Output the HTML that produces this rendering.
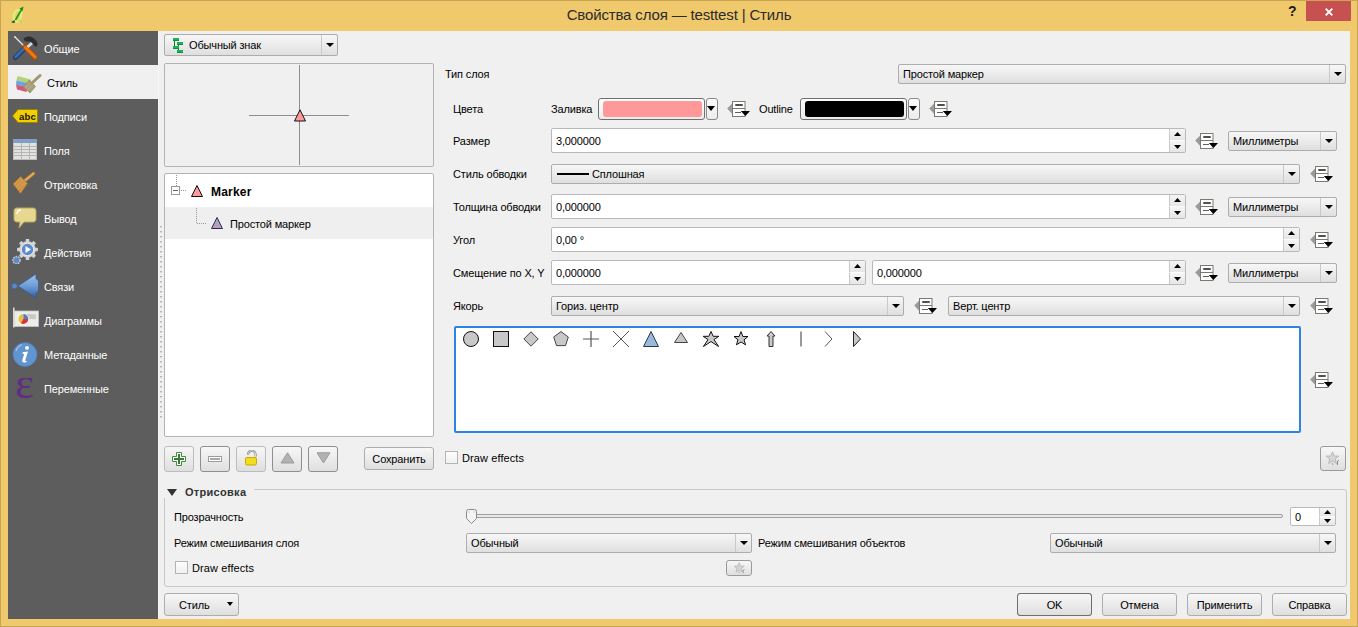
<!DOCTYPE html><html><head><meta charset="utf-8"><title>QGIS</title><style>
*{margin:0;padding:0;box-sizing:border-box}
html,body{width:1358px;height:627px;overflow:hidden}
body{background:#f0c96c;font-family:"Liberation Sans", sans-serif;font-size:11px;color:#000;position:relative}
div,span,svg,i,b{position:absolute;display:block}
.lbl{white-space:nowrap;line-height:16px;color:#000;letter-spacing:-0.15px}
.ct{white-space:nowrap;line-height:14px;color:#000;letter-spacing:-0.15px}
.cb{border:1px solid #adadad;border-radius:2px;background:linear-gradient(#f7f7f7,#dfdfdf)}
.sep{top:0;bottom:0;width:1px;background:#c9c9c9}
.tri{width:0;height:0;border-left:4px solid transparent;border-right:4px solid transparent;border-top:4px solid #000}
.sp{border:1px solid #b9b9b9;border-radius:2px;background:#fff}
.sbtn{border-left:1px solid #c9c9c9;background:linear-gradient(#f5f5f5,#e6e6e6)}
.tup{left:50%;top:50%;margin-left:-4px;margin-top:-2px;width:0;height:0;border-left:4px solid transparent;border-right:4px solid transparent;border-bottom:4px solid #000}
.tdn{left:50%;top:50%;margin-left:-4px;margin-top:-2px;width:0;height:0;border-left:4px solid transparent;border-right:4px solid transparent;border-top:4px solid #000}
.btn{border:1px solid #adadad;border-radius:3px;background:linear-gradient(#f7f7f7,#dfdfdf);text-align:center;white-space:nowrap;padding-top:1px;letter-spacing:-0.15px}
.ddi{}
.side{left:8px;top:31px;width:150px;height:588px;background:#5d5d5d}
.si{color:#fff;white-space:nowrap;line-height:16px;letter-spacing:-0.15px}
</style></head><body>
<div style="left:0;top:0;width:1358px;height:1px;background:#c9a453"></div>
<div style="left:0;top:0;width:1px;height:627px;background:#c9a453"></div>
<div style="left:1357px;top:0;width:1px;height:627px;background:#c9a453"></div>
<div style="left:0;top:626px;width:1358px;height:1px;background:#c9a453"></div>
<div class="lbl" style="left:0;top:6px;width:1358px;text-align:center;font-size:15px;line-height:18px;color:#2b2b2b">Свойства слоя — testtest | Стиль</div>
<div style="left:1306px;top:1px;width:45px;height:20px;background:#c75050"></div>
<svg style="left:1325px;top:8px" width="8" height="8" viewBox="0 0 8 8"><path d="M0.7 0.7 L7.3 7.3 M7.3 0.7 L0.7 7.3" stroke="#fff" stroke-width="1.9"/></svg>
<div style="left:1288px;top:3px;font-weight:bold;font-size:14px;line-height:17px;color:#1a1a1a">?</div>
<svg style="left:11px;top:6px" width="14" height="17" viewBox="0 0 14 17"><ellipse cx="6.5" cy="9.8" rx="3.6" ry="5.8" fill="none" stroke="#dcef7a" stroke-width="2.4" transform="rotate(12 6.5 9.8)"/><path d="M4.5 14 L10.5 3.5" stroke="#1e9a1e" stroke-width="1.7"/><path d="M8.5 2.5 L12.5 0.5 L11.5 5Z" fill="#1a8c1a"/><path d="M0 16 L4 14 L3.5 17.5Z" fill="#1d5f1d"/><path d="M7.5 14 L11 16" stroke="#b8d060" stroke-width="1.4"/></svg>
<div style="left:8px;top:31px;width:1342px;height:588px;background:#f0f0f0"></div>
<div class="side"></div>
<div style="left:8px;top:65px;width:150px;height:34px;background:#f0f0f0"></div>
<div style="left:13px;top:35px"><svg width="26" height="26" viewBox="0 0 26 26"><path d="M1.5 1.5 L12 12" stroke="#e8e8e8" stroke-width="1.3"/><path d="M1 1 L3 2 L2 3Z" fill="#fff"/><path d="M2.5 22.5 L11 14" stroke="#1f3f70" stroke-width="5" stroke-linecap="round"/><path d="M2.5 22 L10.5 14" stroke="#3a6db0" stroke-width="2.6" stroke-linecap="round"/><path d="M11 14 L13 12" stroke="#444" stroke-width="2.4"/><path d="M22 22 L12 12" stroke="#b84f00" stroke-width="5" stroke-linecap="round"/><path d="M22 22 L12.5 12.5" stroke="#f07a10" stroke-width="3" stroke-linecap="round"/><path d="M13.5 11 L18 7 L20 9 L15.5 13Z" fill="#d8d8d8"/><path d="M10.5 4 C12 1.5 17 0 21 3.5 C23 5.3 24 7 24.5 8.5 L23.5 12 L21 10.5 C20 8 18 6 15 6.5 C13 6.8 11.5 6 10.5 4Z" fill="#2e2e2e"/></svg></div>
<div class="si" style="left:44px;top:41px;color:#fff">Общие</div>
<div style="left:16px;top:70px"><svg width="26" height="26" viewBox="0 0 26 26"><path d="M1.5 6 L15 9.5 L13.5 13.5 L0.5 10.5Z" fill="#b5d27a"/><path d="M0.5 10.5 L13.5 13.5 L12 17.5 L0 14.5Z" fill="#64a6e2"/><path d="M0 14.5 L12 17.5 L10.5 22 L1 19.5Z" fill="#d2587c"/><path d="M7 16.5 L13.5 10 L19.5 16.5 L14 23Z" fill="#a89f7a" stroke="#8c8360" stroke-width="0.6"/><path d="M9 18.5 L15 12.5 M11 20.5 L17 14.5" stroke="#c2ba98" stroke-width="0.8"/><path d="M16 13 L24 5.5" stroke="#a0976f" stroke-width="3" stroke-linecap="round"/></svg></div>
<div class="si" style="left:47px;top:75px;color:#000">Стиль</div>
<div style="left:12px;top:109px"><svg width="26" height="14" viewBox="0 0 26 14"><path d="M0.5 7 L6 0.5 L25.5 0.5 L25.5 13.5 L6 13.5 Z" fill="#f2cf00" stroke="#9a8200"/><text x="7" y="10.5" font-family="Liberation Sans" font-weight="bold" font-size="9.5" letter-spacing="0.2" fill="#111">abc</text></svg></div>
<div class="si" style="left:44px;top:109px;color:#fff">Подписи</div>
<div style="left:13px;top:139px"><svg width="24" height="21" viewBox="0 0 24 21"><rect x="0.5" y="0.5" width="23" height="20" fill="#e2e2e0" stroke="#bdbdbb"/><rect x="0" y="0" width="24" height="4" fill="#7f9fc6"/><path d="M1 7.5H23M1 10.5H23M1 13.5H23M1 16.5H23M8.5 4V20M16.5 4V20" stroke="#b5b5b3" stroke-width="1"/></svg></div>
<div class="si" style="left:44px;top:143px;color:#fff">Поля</div>
<div style="left:12px;top:172px"><svg width="24" height="23" viewBox="0 0 24 23"><path d="M13 8.5 L21.5 1.5" stroke="#c98a35" stroke-width="3.2" stroke-linecap="round"/><path d="M13 8.5 L21.5 1.5" stroke="#e8b060" stroke-width="1.4" stroke-linecap="round"/><path d="M1 12 L8.6 4.5 L15.5 11.5 L8.5 21.5Z" fill="#d49a4a" stroke="#a8702c" stroke-width="0.7"/><path d="M3 14 L9.5 7 M5 16.5 L11.5 9.5 M7 19 L13.5 12" stroke="#b8803a" stroke-width="0.6"/></svg></div>
<div class="si" style="left:44px;top:177px;color:#fff">Отрисовка</div>
<div style="left:13px;top:207px"><svg width="24" height="22" viewBox="0 0 24 22"><path d="M4 1 H20 C22 1 23 2 23 4 V12 C23 14 22 15 20 15 H11 L6 21 L7 15 H4 C2 15 1 14 1 12 V4 C1 2 2 1 4 1Z" fill="#e6d88e" stroke="#b9a85a"/><path d="M4 7 C4 4 5 3 8 3" stroke="#fff" stroke-width="1.4" fill="none"/></svg></div>
<div class="si" style="left:44px;top:211px;color:#fff">Вывод</div>
<div style="left:12px;top:238px"><svg width="26" height="26" viewBox="0 0 26 26"><rect x="-1.8" y="-10.4" width="3.6" height="4" rx="0.6" fill="#d4d4d4" transform="translate(15.5 11.5) rotate(0)"/><rect x="-1.8" y="-10.4" width="3.6" height="4" rx="0.6" fill="#d4d4d4" transform="translate(15.5 11.5) rotate(45)"/><rect x="-1.8" y="-10.4" width="3.6" height="4" rx="0.6" fill="#d4d4d4" transform="translate(15.5 11.5) rotate(90)"/><rect x="-1.8" y="-10.4" width="3.6" height="4" rx="0.6" fill="#d4d4d4" transform="translate(15.5 11.5) rotate(135)"/><rect x="-1.8" y="-10.4" width="3.6" height="4" rx="0.6" fill="#d4d4d4" transform="translate(15.5 11.5) rotate(180)"/><rect x="-1.8" y="-10.4" width="3.6" height="4" rx="0.6" fill="#d4d4d4" transform="translate(15.5 11.5) rotate(225)"/><rect x="-1.8" y="-10.4" width="3.6" height="4" rx="0.6" fill="#d4d4d4" transform="translate(15.5 11.5) rotate(270)"/><rect x="-1.8" y="-10.4" width="3.6" height="4" rx="0.6" fill="#d4d4d4" transform="translate(15.5 11.5) rotate(315)"/><circle cx="15.5" cy="11.5" r="8.3" fill="#d4d4d4"/><circle cx="15.5" cy="11.5" r="6.2" fill="#5b8dcc" stroke="#f0f0f0" stroke-width="1"/><path d="M13.5 8 L19 11.5 L13.5 15Z" fill="#fff"/><circle cx="4.5" cy="22.2" r="3.6" fill="#5d8ccc" stroke="#c8c8c8" stroke-width="1.5" stroke-dasharray="1.6 1"/></svg></div>
<div class="si" style="left:44px;top:245px;color:#fff">Действия</div>
<div style="left:11px;top:273px"><svg width="28" height="26" viewBox="0 0 28 26"><defs><linearGradient id="gl" x1="0" y1="0" x2="0" y2="1"><stop offset="0" stop-color="#9fc2ea"/><stop offset="0.5" stop-color="#6f9dd6"/><stop offset="1" stop-color="#2f5f9f"/></linearGradient></defs><path d="M7 13 L25 1 L25 5.5 L27.5 8 L27.5 18 L25 20.5 L25 25 Z" fill="url(#gl)" stroke="#2d5a96" stroke-width="0.7"/><circle cx="3.5" cy="13" r="2.8" fill="#5a88c6" stroke="#3a649e" stroke-width="0.6"/></svg></div>
<div class="si" style="left:44px;top:279px;color:#fff">Связи</div>
<div style="left:12px;top:307px"><svg width="27" height="21" viewBox="0 0 27 21"><rect x="2" y="4" width="24.5" height="15.5" fill="#ecece8" stroke="#c4c4c0" stroke-width="0.8"/><path d="M14 7 C17 6 20 8 24 7 L24 12 C21 13 18 11 15 13Z" fill="#c9c9c5"/><rect x="1" y="0.5" width="1.6" height="20" fill="#d8d8d4"/><circle cx="11.3" cy="12" r="5.6" fill="#fff"/><path d="M11.3 12 L11.3 7 A5 5 0 0 0 8.8 16.3Z" fill="#e8c23a"/><path d="M11.3 12 L8.8 16.3 A5 5 0 0 0 16.3 12Z" fill="#d8333a"/><path d="M11.3 12 L16.3 12 A5 5 0 0 0 11.3 7Z" fill="#4a7fcf"/></svg></div>
<div class="si" style="left:44px;top:313px;color:#fff">Диаграммы</div>
<div style="left:12px;top:342px"><svg width="26" height="26" viewBox="0 0 26 26"><circle cx="13" cy="12.5" r="12" fill="#6294d0" stroke="#4d7dbb" stroke-width="0.8"/><path d="M4 9 A10 10 0 0 1 10 2.5" stroke="#a9c6ea" stroke-width="1.2" fill="none"/><circle cx="15" cy="5.8" r="1.9" fill="#fff"/><path d="M10.5 10.2 L16 9.6 L13.2 18.2 Q12.9 19.4 14.8 18.8 L14.6 20 Q9.8 21.6 10.2 18.6 L12.2 12 L10.6 11.8Z" fill="#fff"/></svg></div>
<div class="si" style="left:44px;top:347px;color:#fff">Метаданные</div>
<div style="left:15px;top:378px"><svg width="22" height="26" viewBox="0 0 22 26"><text x="0" y="20" font-family="Liberation Serif" font-size="45" fill="#5f2d82">ε</text></svg></div>
<div class="si" style="left:44px;top:381px;color:#fff">Переменные</div>
<div style="left:158px;top:31px;width:1px;height:588px;background:#f7f7f7"></div>
<div style="left:160px;top:226px;width:2px;height:193px;background:repeating-linear-gradient(#b4b4b4 0 1px,#d8d8d8 1px 2px,#f0f0f0 2px 5px)"></div>
<div class="cb" style="left:164px;top:34px;width:174px;height:22px"><svg style="left:8px;top:3px" width="11" height="16" viewBox="0 0 11 16"><path d="M1.5 2V10 M5.5 6V14" stroke="#0d7a33" stroke-width="1"/><rect x="0" y="0" width="6" height="3" fill="#1db354"/><rect x="0" y="2" width="6" height="1" fill="#0f8f3c"/><rect x="4" y="4" width="6" height="3" fill="#1db354"/><rect x="4" y="6" width="6" height="1" fill="#0f8f3c"/><rect x="0" y="8" width="6" height="3" fill="#1db354"/><rect x="0" y="10" width="6" height="1" fill="#0f8f3c"/><rect x="4" y="12" width="6" height="3" fill="#1db354"/><rect x="4" y="14" width="6" height="1" fill="#0f8f3c"/></svg><span class="ct" style="left:24px;top:3px">Обычный знак</span><i class="sep" style="left:156px"></i><b class="tri" style="left:161px;top:8px"></b></div>
<div style="left:164px;top:63px;width:270px;height:104px;border:1px solid #b4b4b4;border-radius:2px;background:#f0f0f0"></div>
<div style="left:299px;top:65px;width:1px;height:100px;background:#8e8e8e"></div>
<div style="left:249px;top:115px;width:100px;height:1px;background:#8e8e8e"></div>
<svg style="left:293px;top:108px" width="14" height="15" viewBox="0 0 14 15"><path d="M7 1.8 L12.5 13 L1.5 13Z" fill="#ff9a9a" stroke="#111" stroke-width="1"/></svg>
<div style="left:164px;top:173px;width:270px;height:264px;border:1px solid #b4b4b4;border-radius:2px;background:#fff"></div>
<div style="left:165px;top:207px;width:268px;height:32px;background:#efefef"></div>
<div style="left:176px;top:175px;width:1px;height:11px;background:repeating-linear-gradient(#999 0 1px,transparent 1px 2px)"></div>
<div style="left:171px;top:186px;width:9px;height:9px;border:1px solid #9a9a9a;background:#fff"></div>
<div style="left:173px;top:190px;width:5px;height:1px;background:#666"></div>
<div style="left:181px;top:190px;width:6px;height:1px;background:repeating-linear-gradient(90deg,#999 0 1px,transparent 1px 2px)"></div>
<svg style="left:190px;top:184px" width="14" height="14" viewBox="0 0 14 14"><path d="M7 1.5 L12.5 12.5 L1.5 12.5Z" fill="#ff9a9a" stroke="#111" stroke-width="1"/></svg>
<div class="lbl" style="left:211px;top:184px;font-weight:bold;font-size:12px;letter-spacing:0.2px">Marker</div>
<div style="left:196px;top:208px;width:1px;height:16px;background:repeating-linear-gradient(#999 0 1px,transparent 1px 2px)"></div>
<div style="left:197px;top:223px;width:9px;height:1px;background:repeating-linear-gradient(90deg,#999 0 1px,transparent 1px 2px)"></div>
<svg style="left:210px;top:216px" width="14" height="14" viewBox="0 0 14 14"><path d="M7 1.5 L12.5 12.5 L1.5 12.5Z" fill="#b49fc2" stroke="#2a3050" stroke-width="1"/></svg>
<div class="lbl" style="left:230px;top:216px">Простой маркер</div>
<div class="btn" style="left:164px;top:446px;width:30px;height:26px;border-color:#bcbcbc"><svg style="left:7px;top:5px" width="14" height="14" viewBox="0 0 14 14"><path d="M4.5 0.5 H9.5 V4.5 H13.5 V9.5 H9.5 V13.5 H4.5 V9.5 H0.5 V4.5 H4.5Z" fill="#fff" stroke="#3f8f3f" stroke-width="1"/><path d="M7 2 V12 M2 7 H12" stroke="#3a7a3a" stroke-width="2"/></svg></div>
<div class="btn" style="left:200px;top:446px;width:30px;height:26px;border-color:#8f8f8f"><svg style="left:7px;top:9px" width="14" height="6" viewBox="0 0 14 6"><rect x="0.5" y="0.5" width="13" height="5" fill="#fff" stroke="#9c9c9c"/><rect x="2" y="2" width="10" height="2" fill="#a8a8a8"/></svg></div>
<div class="btn" style="left:236px;top:446px;width:30px;height:26px;border-color:#bcbcbc"><svg style="left:8px;top:3px" width="14" height="16" viewBox="0 0 14 16"><path d="M3 5 C3 1.5 5 0.8 7 0.8 C9.5 0.8 11 2.8 10.5 6.5" stroke="#8c8c8c" stroke-width="2.2" fill="none"/><path d="M3 5 C3 1.5 5 0.8 7 0.8 C9.5 0.8 11 2.8 10.5 6.5" stroke="#e8e8e8" stroke-width="0.9" fill="none"/><rect x="0.5" y="7.5" width="11" height="7.5" rx="1.5" fill="#f2de1e" stroke="#c9a800"/></svg></div>
<div class="btn" style="left:272px;top:446px;width:30px;height:26px;border-color:#8f8f8f"><svg style="left:7px;top:5px" width="15" height="12" viewBox="0 0 15 12"><path d="M7.5 0.8 L14 11 L1 11Z" fill="#b2b2b2" stroke="#9a9a9a" stroke-width="1"/></svg></div>
<div class="btn" style="left:308px;top:446px;width:30px;height:26px;border-color:#8f8f8f"><svg style="left:7px;top:5px" width="15" height="12" viewBox="0 0 15 12"><path d="M1 0.8 L14 0.8 L7.5 11Z" fill="#b2b2b2" stroke="#9a9a9a" stroke-width="1"/></svg></div>
<div class="btn" style="left:364px;top:447px;width:70px;height:23px;line-height:21px">Сохранить</div>
<div class="lbl" style="left:445px;top:66px;">Тип слоя</div>
<div class="cb" style="left:898px;top:64px;width:448px;height:20px"><span class="ct" style="left:4px;top:2px">Простой маркер</span><i class="sep" style="left:430px"></i><b class="tri" style="left:435px;top:7px"></b></div>
<div class="lbl" style="left:453px;top:101px;">Цвета</div>
<div class="lbl" style="left:551px;top:101px;">Заливка</div>
<div style="left:598px;top:98px;width:107px;height:22px;border:1px solid #707070;border-radius:3px;background:linear-gradient(#fdfdfd,#ececec)"></div>
<div style="left:603px;top:101px;width:99px;height:16px;border-radius:3px;background:#ff9999"></div>
<div style="left:706px;top:98px;width:12px;height:22px;border:1px solid #8a8a8a;border-radius:3px;background:linear-gradient(#fdfdfd,#ececec)"></div>
<b class="tri" style="left:707px;top:106px;border-left-width:4.5px;border-right-width:4.5px;border-top-width:5px"></b>
<svg class="ddi" style="left:727px;top:101px" width="24" height="17" viewBox="0 0 24 17"><path d="M0.2 7.5 L5.2 2.5 L5.2 13 Z" fill="#9a9a9a"/><rect x="5.5" y="0.5" width="12.5" height="15" fill="#fff" stroke="#7a7a72"/><path d="M5.5 7.5 H18" stroke="#7a7a72"/><rect x="8" y="3" width="8" height="2" rx="1" fill="#505050"/><rect x="8" y="11" width="6" height="1" fill="#606060"/><path d="M13.8 10 L23 10 L18.4 15 Z" fill="#000"/></svg>
<div class="lbl" style="left:759px;top:101px;">Outline</div>
<div style="left:800px;top:98px;width:107px;height:22px;border:1px solid #707070;border-radius:3px;background:linear-gradient(#fdfdfd,#ececec)"></div>
<div style="left:805px;top:101px;width:99px;height:16px;border-radius:3px;background:#000000"></div>
<div style="left:908px;top:98px;width:12px;height:22px;border:1px solid #8a8a8a;border-radius:3px;background:linear-gradient(#fdfdfd,#ececec)"></div>
<b class="tri" style="left:909px;top:106px;border-left-width:4.5px;border-right-width:4.5px;border-top-width:5px"></b>
<svg class="ddi" style="left:929px;top:101px" width="24" height="17" viewBox="0 0 24 17"><path d="M0.2 7.5 L5.2 2.5 L5.2 13 Z" fill="#9a9a9a"/><rect x="5.5" y="0.5" width="12.5" height="15" fill="#fff" stroke="#7a7a72"/><path d="M5.5 7.5 H18" stroke="#7a7a72"/><rect x="8" y="3" width="8" height="2" rx="1" fill="#505050"/><rect x="8" y="11" width="6" height="1" fill="#606060"/><path d="M13.8 10 L23 10 L18.4 15 Z" fill="#000"/></svg>
<div class="lbl" style="left:453px;top:133px;">Размер</div>
<div class="sp" style="left:551px;top:128px;width:635px;height:25px"><span class="ct" style="left:4px;top:5px">3,000000</span><i class="sbtn" style="left:617px;top:0;width:16px;height:11px"></i><i class="sbtn" style="left:617px;top:11px;width:16px;height:12px;border-top:1px solid #fbfbfb"></i><svg style="left:622px;top:3px" width="7" height="4" viewBox="0 0 7 4"><path d="M0 4 L3.5 0 L7 4Z" fill="#000"/></svg><svg style="left:622px;top:16px" width="7" height="4" viewBox="0 0 7 4"><path d="M0 0 L3.5 4 L7 0Z" fill="#000"/></svg></div>
<svg class="ddi" style="left:1195px;top:133px" width="24" height="17" viewBox="0 0 24 17"><path d="M0.2 7.5 L5.2 2.5 L5.2 13 Z" fill="#9a9a9a"/><rect x="5.5" y="0.5" width="12.5" height="15" fill="#fff" stroke="#7a7a72"/><path d="M5.5 7.5 H18" stroke="#7a7a72"/><rect x="8" y="3" width="8" height="2" rx="1" fill="#505050"/><rect x="8" y="11" width="6" height="1" fill="#606060"/><path d="M13.8 10 L23 10 L18.4 15 Z" fill="#000"/></svg>
<div class="cb" style="left:1228px;top:131px;width:109px;height:20px"><span class="ct" style="left:4px;top:2px">Миллиметры</span><i class="sep" style="left:91px"></i><b class="tri" style="left:96px;top:7px"></b></div>
<div class="lbl" style="left:453px;top:166px;">Стиль обводки</div>
<div class="cb" style="left:551px;top:164px;width:749px;height:20px"><i style="left:5px;top:8px;width:32px;height:2px;background:#000"></i><span class="ct" style="left:40px;top:2px">Сплошная</span><i class="sep" style="left:731px"></i><b class="tri" style="left:736px;top:7px"></b></div>
<svg class="ddi" style="left:1310px;top:166px" width="24" height="17" viewBox="0 0 24 17"><path d="M0.2 7.5 L5.2 2.5 L5.2 13 Z" fill="#9a9a9a"/><rect x="5.5" y="0.5" width="12.5" height="15" fill="#fff" stroke="#7a7a72"/><path d="M5.5 7.5 H18" stroke="#7a7a72"/><rect x="8" y="3" width="8" height="2" rx="1" fill="#505050"/><rect x="8" y="11" width="6" height="1" fill="#606060"/><path d="M13.8 10 L23 10 L18.4 15 Z" fill="#000"/></svg>
<div class="lbl" style="left:453px;top:199px;">Толщина обводки</div>
<div class="sp" style="left:551px;top:194px;width:635px;height:25px"><span class="ct" style="left:4px;top:5px">0,000000</span><i class="sbtn" style="left:617px;top:0;width:16px;height:11px"></i><i class="sbtn" style="left:617px;top:11px;width:16px;height:12px;border-top:1px solid #fbfbfb"></i><svg style="left:622px;top:3px" width="7" height="4" viewBox="0 0 7 4"><path d="M0 4 L3.5 0 L7 4Z" fill="#000"/></svg><svg style="left:622px;top:16px" width="7" height="4" viewBox="0 0 7 4"><path d="M0 0 L3.5 4 L7 0Z" fill="#000"/></svg></div>
<svg class="ddi" style="left:1195px;top:199px" width="24" height="17" viewBox="0 0 24 17"><path d="M0.2 7.5 L5.2 2.5 L5.2 13 Z" fill="#9a9a9a"/><rect x="5.5" y="0.5" width="12.5" height="15" fill="#fff" stroke="#7a7a72"/><path d="M5.5 7.5 H18" stroke="#7a7a72"/><rect x="8" y="3" width="8" height="2" rx="1" fill="#505050"/><rect x="8" y="11" width="6" height="1" fill="#606060"/><path d="M13.8 10 L23 10 L18.4 15 Z" fill="#000"/></svg>
<div class="cb" style="left:1228px;top:197px;width:109px;height:20px"><span class="ct" style="left:4px;top:2px">Миллиметры</span><i class="sep" style="left:91px"></i><b class="tri" style="left:96px;top:7px"></b></div>
<div class="lbl" style="left:453px;top:232px;">Угол</div>
<div class="sp" style="left:551px;top:227px;width:749px;height:25px"><span class="ct" style="left:4px;top:5px">0,00 °</span><i class="sbtn" style="left:731px;top:0;width:16px;height:11px"></i><i class="sbtn" style="left:731px;top:11px;width:16px;height:12px;border-top:1px solid #fbfbfb"></i><svg style="left:736px;top:3px" width="7" height="4" viewBox="0 0 7 4"><path d="M0 4 L3.5 0 L7 4Z" fill="#000"/></svg><svg style="left:736px;top:16px" width="7" height="4" viewBox="0 0 7 4"><path d="M0 0 L3.5 4 L7 0Z" fill="#000"/></svg></div>
<svg class="ddi" style="left:1310px;top:232px" width="24" height="17" viewBox="0 0 24 17"><path d="M0.2 7.5 L5.2 2.5 L5.2 13 Z" fill="#9a9a9a"/><rect x="5.5" y="0.5" width="12.5" height="15" fill="#fff" stroke="#7a7a72"/><path d="M5.5 7.5 H18" stroke="#7a7a72"/><rect x="8" y="3" width="8" height="2" rx="1" fill="#505050"/><rect x="8" y="11" width="6" height="1" fill="#606060"/><path d="M13.8 10 L23 10 L18.4 15 Z" fill="#000"/></svg>
<div class="lbl" style="left:453px;top:265px;">Смещение по X, Y</div>
<div class="sp" style="left:551px;top:260px;width:315px;height:25px"><span class="ct" style="left:4px;top:5px">0,000000</span><i class="sbtn" style="left:297px;top:0;width:16px;height:11px"></i><i class="sbtn" style="left:297px;top:11px;width:16px;height:12px;border-top:1px solid #fbfbfb"></i><svg style="left:302px;top:3px" width="7" height="4" viewBox="0 0 7 4"><path d="M0 4 L3.5 0 L7 4Z" fill="#000"/></svg><svg style="left:302px;top:16px" width="7" height="4" viewBox="0 0 7 4"><path d="M0 0 L3.5 4 L7 0Z" fill="#000"/></svg></div>
<div class="sp" style="left:872px;top:260px;width:314px;height:25px"><span class="ct" style="left:4px;top:5px">0,000000</span><i class="sbtn" style="left:296px;top:0;width:16px;height:11px"></i><i class="sbtn" style="left:296px;top:11px;width:16px;height:12px;border-top:1px solid #fbfbfb"></i><svg style="left:301px;top:3px" width="7" height="4" viewBox="0 0 7 4"><path d="M0 4 L3.5 0 L7 4Z" fill="#000"/></svg><svg style="left:301px;top:16px" width="7" height="4" viewBox="0 0 7 4"><path d="M0 0 L3.5 4 L7 0Z" fill="#000"/></svg></div>
<svg class="ddi" style="left:1195px;top:265px" width="24" height="17" viewBox="0 0 24 17"><path d="M0.2 7.5 L5.2 2.5 L5.2 13 Z" fill="#9a9a9a"/><rect x="5.5" y="0.5" width="12.5" height="15" fill="#fff" stroke="#7a7a72"/><path d="M5.5 7.5 H18" stroke="#7a7a72"/><rect x="8" y="3" width="8" height="2" rx="1" fill="#505050"/><rect x="8" y="11" width="6" height="1" fill="#606060"/><path d="M13.8 10 L23 10 L18.4 15 Z" fill="#000"/></svg>
<div class="cb" style="left:1228px;top:263px;width:109px;height:20px"><span class="ct" style="left:4px;top:2px">Миллиметры</span><i class="sep" style="left:91px"></i><b class="tri" style="left:96px;top:7px"></b></div>
<div class="lbl" style="left:453px;top:298px;">Якорь</div>
<div class="cb" style="left:551px;top:296px;width:353px;height:20px"><span class="ct" style="left:4px;top:2px">Гориз. центр</span><i class="sep" style="left:335px"></i><b class="tri" style="left:340px;top:7px"></b></div>
<svg class="ddi" style="left:914px;top:298px" width="24" height="17" viewBox="0 0 24 17"><path d="M0.2 7.5 L5.2 2.5 L5.2 13 Z" fill="#9a9a9a"/><rect x="5.5" y="0.5" width="12.5" height="15" fill="#fff" stroke="#7a7a72"/><path d="M5.5 7.5 H18" stroke="#7a7a72"/><rect x="8" y="3" width="8" height="2" rx="1" fill="#505050"/><rect x="8" y="11" width="6" height="1" fill="#606060"/><path d="M13.8 10 L23 10 L18.4 15 Z" fill="#000"/></svg>
<div class="cb" style="left:948px;top:296px;width:352px;height:20px"><span class="ct" style="left:4px;top:2px">Верт. центр</span><i class="sep" style="left:334px"></i><b class="tri" style="left:339px;top:7px"></b></div>
<svg class="ddi" style="left:1310px;top:298px" width="24" height="17" viewBox="0 0 24 17"><path d="M0.2 7.5 L5.2 2.5 L5.2 13 Z" fill="#9a9a9a"/><rect x="5.5" y="0.5" width="12.5" height="15" fill="#fff" stroke="#7a7a72"/><path d="M5.5 7.5 H18" stroke="#7a7a72"/><rect x="8" y="3" width="8" height="2" rx="1" fill="#505050"/><rect x="8" y="11" width="6" height="1" fill="#606060"/><path d="M13.8 10 L23 10 L18.4 15 Z" fill="#000"/></svg>
<div style="left:454px;top:326px;width:847px;height:107px;border:2px solid #2b83e5;border-radius:2px;background:#fff"></div>
<svg style="left:463px;top:331px" width="16" height="16" viewBox="0 0 16 16"><circle cx="8" cy="8" r="7.5" fill="#c8c8c8" stroke="#111" stroke-width="1"/></svg>
<svg style="left:493px;top:331px" width="16" height="16" viewBox="0 0 16 16"><rect x="0.5" y="0.5" width="15" height="15" fill="#c8c8c8" stroke="#111" stroke-width="1"/></svg>
<svg style="left:523px;top:331px" width="16" height="16" viewBox="0 0 16 16"><path d="M8 0.8 L15.2 8 L8 15.2 L0.8 8Z" fill="#c8c8c8" stroke="#444" stroke-width="1"/></svg>
<svg style="left:553px;top:331px" width="16" height="16" viewBox="0 0 16 16"><path d="M8 0.6 L15.3 6 L12.5 14.6 L3.5 14.6 L0.7 6Z" fill="#c8c8c8" stroke="#444" stroke-width="1"/></svg>
<svg style="left:583px;top:331px" width="16" height="16" viewBox="0 0 16 16"><path d="M8 0 V16 M0 8 H16" stroke="#555" stroke-width="1.2"/></svg>
<svg style="left:613px;top:331px" width="16" height="16" viewBox="0 0 16 16"><path d="M0 0 L16 16 M16 0 L0 16" stroke="#555" stroke-width="1"/></svg>
<svg style="left:643px;top:331px" width="16" height="16" viewBox="0 0 16 16"><path d="M8 0.5 L15.5 15.5 L0.5 15.5Z" fill="#9ab8d8" stroke="#263a5a" stroke-width="1"/></svg>
<svg style="left:673px;top:331px" width="16" height="16" viewBox="0 0 16 16"><path d="M8 1.5 L14.5 11.5 L1.5 11.5Z" fill="#c8c8c8" stroke="#444" stroke-width="1"/></svg>
<svg style="left:703px;top:331px" width="16" height="16" viewBox="0 0 16 16"><path d="M8 0.5 L10.2 5.3 L15.8 5.3 L11 8.6 L15.6 15.5 L8 10.6 L0.4 15.5 L5 8.6 L0.2 5.3 L5.8 5.3Z" fill="#c8c8c8" stroke="#111" stroke-width="1"/></svg>
<svg style="left:733px;top:331px" width="16" height="16" viewBox="0 0 16 16"><path d="M8 0.6 L9.9 5.5 L15 5.5 L11 8.8 L12.6 13.8 L8 11 L3.4 13.8 L5 8.8 L1 5.5 L6.1 5.5Z" fill="#c8c8c8" stroke="#111" stroke-width="1"/></svg>
<svg style="left:763px;top:331px" width="16" height="16" viewBox="0 0 16 16"><path d="M8 0.5 L12 5 L10 5 L10 15.5 L6 15.5 L6 5 L4 5Z" fill="#c8c8c8" stroke="#333" stroke-width="1"/></svg>
<svg style="left:793px;top:331px" width="16" height="16" viewBox="0 0 16 16"><path d="M8 0.5 V15.5" stroke="#555" stroke-width="1.2"/></svg>
<svg style="left:819px;top:331px" width="16" height="16" viewBox="0 0 16 16"><path d="M6 0.5 L13 8 L6 15.5" stroke="#555" stroke-width="1" fill="none"/></svg>
<svg style="left:849px;top:331px" width="16" height="16" viewBox="0 0 16 16"><path d="M4.5 0.5 L11.5 8 L4.5 15.5Z" fill="#c8c8c8" stroke="#222" stroke-width="1"/></svg>
<svg class="ddi" style="left:1310px;top:372px" width="24" height="17" viewBox="0 0 24 17"><path d="M0.2 7.5 L5.2 2.5 L5.2 13 Z" fill="#9a9a9a"/><rect x="5.5" y="0.5" width="12.5" height="15" fill="#fff" stroke="#7a7a72"/><path d="M5.5 7.5 H18" stroke="#7a7a72"/><rect x="8" y="3" width="8" height="2" rx="1" fill="#505050"/><rect x="8" y="11" width="6" height="1" fill="#606060"/><path d="M13.8 10 L23 10 L18.4 15 Z" fill="#000"/></svg>
<div style="left:445px;top:451px;width:13px;height:13px;border:1px solid #b4b4b4;background:linear-gradient(#fdfdfd,#f0f0f0)"></div>
<div class="lbl" style="left:462px;top:450px;letter-spacing:0.1px">Draw effects</div>
<div class="btn" style="left:1320px;top:446px;width:26px;height:25px;border-color:#9a9a9a"></div>
<svg style="left:1326px;top:451px" width="15" height="15" viewBox="0 0 15 15"><path d="M6.5 0.8 L8.2 5 L12.7 5.2 L9.2 8 L10.5 12.5 L6.5 10 L2.5 12.5 L3.8 8 L0.3 5.2 L4.8 5Z" fill="#d6d6d6" stroke="#b4b4b4" stroke-width="0.9"/><path d="M11.5 14 V10.5 Q11.5 9.5 13 9.5" stroke="#888" stroke-width="1" fill="none"/><path d="M6 12 L7 14" stroke="#999" stroke-width="1"/></svg>
<div style="left:164px;top:489px;width:1183px;height:98px;border:1px solid #c8c8c8;border-radius:3px"></div>
<div style="left:160px;top:484px;width:94px;height:14px;background:#f0f0f0"></div>
<svg style="left:167px;top:489px" width="11" height="8" viewBox="0 0 11 8"><path d="M0 0 H10 L5 7Z" fill="#333"/></svg>
<div class="lbl" style="left:185px;top:484px;font-weight:bold;color:#333;letter-spacing:0.3px">Отрисовка</div>
<div class="lbl" style="left:174px;top:509px;">Прозрачность</div>
<div style="left:466px;top:514px;width:817px;height:4px;border:1px solid #a0a0a0;border-radius:2px;background:#e7e7e7"></div>
<svg style="left:465px;top:508px" width="13" height="17" viewBox="0 0 13 17"><path d="M1.5 3.5 Q1.5 1.5 3.5 1.5 H9.5 Q11.5 1.5 11.5 3.5 V10.5 L6.5 15.5 L1.5 10.5Z" fill="#f4f4f4" stroke="#8a8a8a" stroke-width="1"/><path d="M3.5 4H4.5M8.5 4H9.5" stroke="#aaa"/></svg>
<div class="sp" style="left:1290px;top:507px;width:46px;height:19px"><span class="ct" style="left:4px;top:2px">0</span><i class="sbtn" style="left:28px;top:0;width:16px;height:8px"></i><i class="sbtn" style="left:28px;top:8px;width:16px;height:9px;border-top:1px solid #fbfbfb"></i><svg style="left:33px;top:2px" width="7" height="4" viewBox="0 0 7 4"><path d="M0 4 L3.5 0 L7 4Z" fill="#000"/></svg><svg style="left:33px;top:11px" width="7" height="4" viewBox="0 0 7 4"><path d="M0 0 L3.5 4 L7 0Z" fill="#000"/></svg></div>
<div class="lbl" style="left:174px;top:535px;">Режим смешивания слоя</div>
<div class="cb" style="left:466px;top:533px;width:286px;height:20px"><span class="ct" style="left:4px;top:2px">Обычный</span><i class="sep" style="left:268px"></i><b class="tri" style="left:273px;top:7px"></b></div>
<div class="lbl" style="left:758px;top:535px;">Режим смешивания объектов</div>
<div class="cb" style="left:1050px;top:533px;width:286px;height:20px"><span class="ct" style="left:4px;top:2px">Обычный</span><i class="sep" style="left:268px"></i><b class="tri" style="left:273px;top:7px"></b></div>
<div style="left:175px;top:561px;width:13px;height:13px;border:1px solid #b4b4b4;background:linear-gradient(#fdfdfd,#f0f0f0)"></div>
<div class="lbl" style="left:192px;top:560px;letter-spacing:0.1px">Draw effects</div>
<div class="btn" style="left:726px;top:560px;width:26px;height:16px;border-color:#9a9a9a"></div>
<svg style="left:734px;top:562px" width="12" height="12" viewBox="0 0 15 15"><path d="M6.5 0.8 L8.2 5 L12.7 5.2 L9.2 8 L10.5 12.5 L6.5 10 L2.5 12.5 L3.8 8 L0.3 5.2 L4.8 5Z" fill="#d6d6d6" stroke="#b4b4b4" stroke-width="0.9"/><path d="M11.5 14 V10.5 Q11.5 9.5 13 9.5" stroke="#888" stroke-width="1" fill="none"/><path d="M6 12 L7 14" stroke="#999" stroke-width="1"/></svg>
<div class="btn" style="left:164px;top:593px;width:75px;height:23px;line-height:21px"><span class="ct" style="left:14px;top:4px">Стиль</span><b class="tri" style="left:62px;top:8px;border-left-width:3.5px;border-right-width:3.5px;border-top-width:4px"></b></div>
<div class="btn" style="left:1017px;top:593px;width:75px;height:23px;line-height:21px">OK</div>
<div style="left:1017px;top:593px;width:75px;height:23px;border:1px solid #6e6e6e;border-radius:3px"></div>
<div class="btn" style="left:1102px;top:593px;width:75px;height:23px;line-height:21px">Отмена</div>
<div class="btn" style="left:1187px;top:593px;width:75px;height:23px;line-height:21px">Применить</div>
<div class="btn" style="left:1272px;top:593px;width:75px;height:23px;line-height:21px">Справка</div>
</body></html>
